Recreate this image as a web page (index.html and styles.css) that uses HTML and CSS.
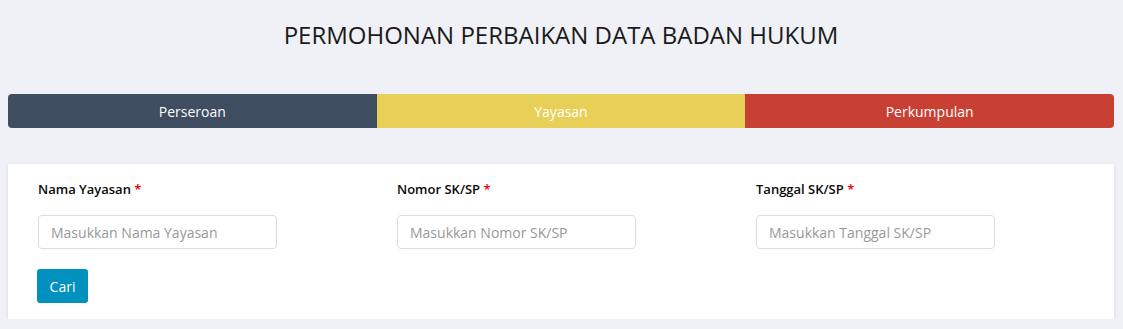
FILE: index.html
```html
<!DOCTYPE html>
<html lang="en">
<head>
    <meta charset="UTF-8">
    <meta name="viewport" content="width=device-width, initial-scale=1.0">
    <title>Permohonan Perbaikan Data</title>
    <link rel="stylesheet" href="styles.css">
</head>
<body>
    <h1 class="page-title">PERMOHONAN PERBAIKAN DATA BADAN HUKUM</h1>

    <div class="tabs">
        <button class="tab tab-perseroan">Perseroan</button>
        <button class="tab tab-yayasan">Yayasan</button>
        <button class="tab tab-perkumpulan">Perkumpulan</button>
    </div>

    <div class="card">
        <div class="form-row">
            <div class="form-group">
                <label>Nama Yayasan <span class="required">*</span></label>
                <input type="text" placeholder="Masukkan Nama Yayasan">
            </div>
            <div class="form-group">
                <label>Nomor SK/SP <span class="required">*</span></label>
                <input type="text" placeholder="Masukkan Nomor SK/SP">
            </div>
            <div class="form-group">
                <label>Tanggal SK/SP <span class="required">*</span></label>
                <input type="text" placeholder="Masukkan Tanggal SK/SP">
            </div>
        </div>
        <button class="btn-cari">Cari</button>
    </div>
</body>
</html>
```

FILE: styles.css
```css
html {
    box-sizing: border-box;
}

*, *::before, *::after {
    box-sizing: inherit;
}

body {
    margin: 0;
    padding: 0 9px 0 8px;
    background: #f0f1f6;
    font-family: "Open Sans", sans-serif;
    color: #111;
}

.page-title {
    margin: 0;
    padding-top: 18px;
    height: 94px;
    text-align: center;
    font-size: 24px;
    font-weight: 400;
    color: #1a1a1a;
}

.tabs {
    display: grid;
    grid-template-columns: repeat(3, 1fr);
    height: 34px;
    border-radius: 4px;
    overflow: hidden;
}

.tab {
    border: none;
    margin: 0;
    font-family: "Open Sans", sans-serif;
    font-size: 14px;
    color: white;
    cursor: pointer;
}

.tab-perseroan {
    background: #3e4d60;
}

.tab-yayasan {
    background: #e8cf57;
}

.tab-perkumpulan {
    background: #c83f33;
}

.card {
    margin-top: 36px;
    background: white;
    padding: 16px 30px 16px 29px;
    box-shadow: 0 1px 3px rgba(0, 0, 0, 0.12);
}

.form-row {
    display: grid;
    grid-template-columns: repeat(3, 239px);
    column-gap: 120px;
    padding-left: 1px;
}

.form-group label {
    display: block;
    font-size: 13px;
    font-weight: 650;
    color: #0a0a0a;
    margin-bottom: 17px;
}

.required {
    color: #e00;
}

.form-group input {
    width: 239px;
    height: 34px;
    padding: 0 12px;
    border: 1px solid #ddd;
    border-radius: 4px;
    font-family: "Open Sans", sans-serif;
    font-size: 14px;
    color: #333;
}

.form-group input::placeholder {
    color: #999;
}

.btn-cari {
    margin-top: 20px;
    width: 51px;
    height: 34px;
    border: none;
    border-radius: 3px;
    background: #0091bf;
    color: white;
    font-family: "Open Sans", sans-serif;
    font-size: 14px;
    cursor: pointer;
}
```
